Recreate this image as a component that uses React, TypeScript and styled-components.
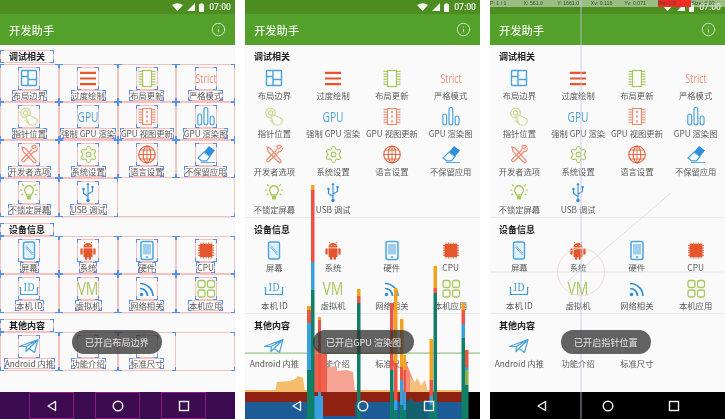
import React from 'react';
import styled, { createGlobalStyle, css } from 'styled-components';
import { Info, Settings } from 'lucide-react';

type Mode = 'bounds' | 'gpu' | 'pointer';

const BLUE = '#4ba3de';
const RED = '#e4572e';
const GREEN = '#a9c75c';
const SALMON = '#ee8c72';

const GlobalStyle = createGlobalStyle`
  html, body { margin: 0; padding: 0; background: #fff; }
  body { width: 725px; height: 419px; overflow: hidden; font-family: "Noto Sans CJK SC", "Noto Sans", sans-serif; }
`;

const corner = 'linear-gradient(#5b8fe8, #5b8fe8)';
const edge = 'linear-gradient(#f7c0c0, #f7c0c0)';

// the debug overlay: pink box with blue corner ticks
const marks = css`
  background-repeat: no-repeat;
  background-image:
    ${corner}, ${corner}, ${corner}, ${corner}, ${corner}, ${corner}, ${corner}, ${corner},
    ${edge}, ${edge}, ${edge}, ${edge};
  background-size:
    4px 1px, 1px 4px, 4px 1px, 1px 4px, 4px 1px, 1px 4px, 4px 1px, 1px 4px,
    100% 1px, 100% 1px, 1px 100%, 1px 100%;
  background-position:
    0 0, 0 0, 100% 0, 100% 0, 0 100%, 0 100%, 100% 100%, 100% 100%,
    0 0, 0 100%, 0 0, 100% 0;
`;

const Screens = styled.div`
  display: flex;
  gap: 10px;
  width: 725px;
  height: 419px;
`;

const Phone = styled.div`
  position: relative;
  width: 235px;
  height: 419px;
  flex: none;
  display: flex;
  flex-direction: column;
  overflow: hidden;
  background: #fafafa;
  filter: blur(0.35px);
`;

const StatusBar = styled.div`
  height: 14px;
  flex: none;
  display: flex;
  align-items: center;
  justify-content: flex-end;
  gap: 4px;
  padding-right: 4px;
  background: #4c8c20;
`;

const Clock = styled.span`
  font-family: Roboto, sans-serif;
  font-size: 8.6px;
  font-weight: 500;
  color: #f2f6ee;
  margin-left: 1px;
`;

const AppBar = styled.div`
  height: 31px;
  flex: none;
  display: flex;
  align-items: center;
  justify-content: space-between;
  padding: 0 9px;
  background: #53a02b;
  color: #eef6e8;
`;

const Title = styled.span`
  font-size: 11.3px;
  font-weight: 500;
  line-height: 16px;
`;

const Content = styled.div`
  flex: 1;
  min-height: 0;
`;

const Section = styled.section<{ $last?: boolean }>`
  border-bottom: ${(p) => (p.$last ? 'none' : '1px solid #e9e9e9')};
`;

const Heading = styled.div`
  height: 18.5px;
  padding-top: 5px;
  box-sizing: border-box;
  display: flex;
  align-items: flex-start;
`;

const HeadingText = styled.span<{ $bounds: boolean }>`
  padding: 0 9px;
  font-size: 9px;
  font-weight: 700;
  line-height: 13px;
  color: #222;
  ${(p) => p.$bounds && marks}
`;

const Grid = styled.div<{ $bounds: boolean }>`
  display: grid;
  grid-template-columns: repeat(4, 1fr);
  grid-auto-rows: 38.3px;
  ${(p) => p.$bounds && marks}
`;

const Cell = styled.div<{ $bounds: boolean }>`
  display: flex;
  flex-direction: column;
  align-items: center;
  padding-top: 3px;
  box-sizing: border-box;
  min-width: 0;
  ${(p) => p.$bounds && marks}
`;

const IconBox = styled.div<{ $bounds: boolean }>`
  width: 22px;
  height: 23px;
  flex: none;
  display: flex;
  align-items: center;
  justify-content: center;
  ${(p) => p.$bounds && marks}
`;

const Label = styled.span<{ $bounds: boolean }>`
  padding: 0 1px;
  font-size: 8.3px;
  line-height: 11px;
  color: #5a5a5a;
  white-space: nowrap;
  ${(p) => p.$bounds && marks}
`;

const NavBar = styled.div<{ $mode: Mode }>`
  height: 27px;
  flex: none;
  display: flex;
  align-items: center;
  justify-content: center;
  gap: 21px;
  background: ${(p) => (p.$mode === 'bounds' ? '#3b0a4f' : '#000')};
`;

const NavButton = styled.div<{ $bounds: boolean }>`
  position: relative;
  z-index: 2;
  width: 45px;
  height: 27px;
  display: flex;
  align-items: center;
  justify-content: center;
  ${(p) => p.$bounds && 'box-shadow: inset 0 0 0 1px #8c1a86;'}
`;

const Toast = styled.div<{ $left: number }>`
  position: absolute;
  z-index: 3;
  top: 330px;
  left: ${(p) => p.$left}px;
  height: 24px;
  padding: 0 13px;
  display: flex;
  align-items: center;
  border-radius: 12px;
  background: rgba(50, 50, 50, 0.76);
  color: #e4e4e4;
  font-size: 9.1px;
  white-space: nowrap;
`;

const Overlay = styled.svg`
  position: absolute;
  z-index: 1;
  left: 0;
  top: 0;
  pointer-events: none;
`;

const PointerInfo = styled.div`
  position: absolute;
  z-index: 4;
  left: 0;
  right: 0;
  top: 0;
  height: 7px;
  display: flex;
  background: rgba(200, 220, 190, 0.62);
`;

const PointerCell = styled.span<{ $alert?: boolean }>`
  flex: 1;
  font-family: "Liberation Sans", sans-serif;
  font-size: 5.2px;
  line-height: 7px;
  color: #3b4a33;
  white-space: nowrap;
  background: ${(p) => (p.$alert ? '#f02a24' : 'transparent')};
`;

const Ico = ({ children }: { children: React.ReactNode }) => (
  <svg width="22" height="23" viewBox="0 0 22 23" fill="none" strokeWidth="1.2" overflow="visible">
    {children}
  </svg>
);

const pins = (xs: number[], y0: number, count: number, len: number) =>
  xs
    .map((x) =>
      Array.from({ length: count }, (_, i) => `M${x} ${y0 + i * 2.6}h${len}`).join(''),
    )
    .join('');

const Chip = ({ color, dotted }: { color: string; dotted?: boolean }) => (
  <Ico>
    <rect x="6.5" y="3.5" width="9" height="16" stroke={color} />
    <path d={pins([3, 16], 4.5, 6, 3)} stroke={color} strokeWidth="1" />
    <path d="M3 3.5v16M19 3.5v16" stroke={color} strokeWidth="0.7" strokeDasharray="1.6 1" />
    {dotted && <path d="M11 6v12" stroke={color} strokeWidth="1.6" strokeDasharray="2 2.6" />}
  </Ico>
);

const Word = ({ text, color, size, w, y = 16 }: { text: string; color: string; size: number; w: number; y?: number }) => (
  <Ico>
    <text
      x={11 - w / 2}
      y={y}
      fontFamily="Open Sans, sans-serif"
      fontSize={size}
      fill={color}
      textLength={w}
      lengthAdjust="spacingAndGlyphs"
    >
      {text}
    </text>
  </Ico>
);

const icons: Record<string, React.ReactNode> = {
  layout: (
    <Ico>
      <rect x="3.5" y="3.5" width="15" height="15" rx="1" stroke={BLUE} strokeWidth="1.4" />
      <path d="M10 3.5v15M3.5 9.5H10M10 12.5h8.5" stroke={BLUE} strokeWidth="1.4" />
    </Ico>
  ),
  overdraw: (
    <Ico>
      <path d="M3 5.8h16M3 11.5h16M3 17.2h16" stroke={RED} strokeWidth="2.2" />
    </Ico>
  ),
  update: <Chip color={GREEN} />,
  strict: <Word text="Strict" color={SALMON} size={13} w={21} />,
  pointer: (
    <Ico>
      <circle cx="7.5" cy="8" r="4.8" stroke="#cfdc96" strokeWidth="1.3" />
      <circle cx="7.5" cy="8" r="2.2" stroke="#cfdc96" />
      <path d="M10 10l3 1 5 2.5c1.5 1 1.5 3 .5 4.5l-1.5 2h-5l-4-4 2 .5-2-4.5z" fill="#fafafa" stroke="#cfdc96" />
    </Ico>
  ),
  gpu: <Word text="GPU" color={BLUE} size={15} w={21} y={16.5} />,
  gpuView: <Chip color={SALMON} dotted />,
  chart: (
    <Ico>
      <rect x="2.8" y="9" width="3.8" height="11" rx="1.9" stroke={BLUE} />
      <rect x="9" y="2.5" width="3.8" height="17.5" rx="1.9" stroke={BLUE} />
      <rect x="15.2" y="11" width="3.8" height="9" rx="1.9" stroke={BLUE} />
    </Ico>
  ),
  tools: (
    <Ico>
      <path d="M4 4l3 1 11 12.5c.8 1.2-.8 2.8-2 2L5 8.5z" stroke={SALMON} />
      <path d="M18.5 3.5l-2.6 2.4-1.6-.8-.4-1.6C15.5 2 17.5 2 18.5 3.5zM14 6.5L4 16.5c-1 1.2 .6 3 2 2l10-10c1.8.4 3.6-1 3.4-3.6" stroke={SALMON} />
    </Ico>
  ),
  gear: <Settings size={19} strokeWidth={1.3} color={GREEN} />,
  globe: (
    <Ico>
      <circle cx="11" cy="11.5" r="8.3" stroke={RED} opacity="0.85" />
      <ellipse cx="11" cy="11.5" rx="3.8" ry="8.3" stroke={RED} opacity="0.85" />
      <path d="M11 3.2v16.6M2.7 11.5h16.6M4 7h14M4 16h14" stroke={RED} strokeWidth="1" opacity="0.85" />
    </Ico>
  ),
  eraser: (
    <Ico>
      <path d="M14 3l6 4.5-5 6-6-4.5z" fill="#2f8fdc" />
      <path d="M9 9l6 4.5-3.5 4.3H6.5L3 15z" stroke={BLUE} />
      <path d="M6 19.5h14" stroke={BLUE} strokeWidth="0.9" />
    </Ico>
  ),
  bulb: (
    <Ico>
      <path d="M7 11a4.4 4.4 0 1 1 8 0c-.6 1-1.2 1.6-1.4 3H8.4c-.2-1.4-.8-2-1.4-3z" stroke={GREEN} strokeWidth="1.3" />
      <path d="M8.6 15h4.8l-.6 3.5h-3.6z" fill={GREEN} />
      <path d="M2 9h2.4M17.6 9H20M4 3.5l1.8 1.6M18 3.5l-1.8 1.6M3.5 14l1.8-1.2M18.5 14l-1.8-1.2" stroke={GREEN} />
    </Ico>
  ),
  usb: (
    <Ico>
      <path d="M11 1.5l-1.6 2.6h3.2z" fill="#2f8fdc" />
      <path d="M11 4v15M11 15.5l-4.5-3V9M11 13l4.5-2.5V7" stroke="#2f8fdc" strokeWidth="1.1" />
      <circle cx="6.5" cy="8" r="1.3" fill="#2f8fdc" />
      <rect x="14.4" y="5" width="2.2" height="2.2" fill="#2f8fdc" />
      <circle cx="11" cy="19.5" r="1.8" fill="#2f8fdc" />
    </Ico>
  ),
  screen: (
    <Ico>
      <rect x="5.5" y="3" width="11" height="17" rx="2" stroke={BLUE} strokeWidth="1.4" fill="#e3f1fa" />
      <path d="M7.5 8l7 8M8 6.5l6.5 7.5" stroke={BLUE} strokeWidth="0.8" />
    </Ico>
  ),
  android: (
    <Ico>
      <path d="M6.5 8.5a4.5 4.5 0 0 1 9 0z" fill={RED} />
      <path d="M8 4.5L7 2.8M14 4.5l1-1.7" stroke={RED} strokeWidth="0.8" />
      <path d="M6.5 9.3h9v8a1 1 0 0 1-1 1h-7a1 1 0 0 1-1-1z" fill={RED} />
      <rect x="3.4" y="9.3" width="2.3" height="6.5" rx="1.15" fill={RED} />
      <rect x="16.3" y="9.3" width="2.3" height="6.5" rx="1.15" fill={RED} />
      <rect x="8" y="17" width="2.3" height="4" rx="1.15" fill={RED} />
      <rect x="11.7" y="17" width="2.3" height="4" rx="1.15" fill={RED} />
      <circle cx="9.2" cy="6.6" r="0.6" fill="#fafafa" />
      <circle cx="12.8" cy="6.6" r="0.6" fill="#fafafa" />
    </Ico>
  ),
  hardware: (
    <Ico>
      <rect x="5" y="2.5" width="12" height="18" rx="2" stroke={BLUE} strokeWidth="1.5" />
      <rect x="7" y="5" width="8" height="10.5" fill="#9ed0ee" />
      <circle cx="11" cy="18" r="1" fill={BLUE} />
    </Ico>
  ),
  cpu: (
    <Ico>
      <rect x="4.5" y="5" width="13" height="13" rx="1" fill={RED} />
      <path d="M3 6.5h16M3 9h16M3 11.5h16M3 14h16M3 16.5h16" stroke={RED} strokeWidth="0.9" />
      <path d="M6 3.5v16M8.5 3.5v16M11 3.5v16M13.5 3.5v16M16 3.5v16" stroke={RED} strokeWidth="0.9" />
    </Ico>
  ),
  id: (
    <Ico>
      <path d="M2.5 10v7.5h17V10M1.5 10.5h1M19.5 10.5h1" stroke="#3f9bd8" strokeWidth="1.2" />
      <text x="5.5" y="14" fontFamily="DejaVu Serif, serif" fontSize="11" fill="#3f9bd8" textLength="11" lengthAdjust="spacingAndGlyphs">
        ID
      </text>
    </Ico>
  ),
  vm: <Word text="VM" color={GREEN} size={19} w={21} y={18} />,
  wifi: (
    <Ico>
      <circle cx="5.5" cy="17.5" r="1.8" fill="#2f8fdc" />
      <path d="M4 11.5a7.5 7.5 0 0 1 7.5 7.5M4 6.5A13 13 0 0 1 17 19" stroke="#2f8fdc" strokeWidth="1.7" />
    </Ico>
  ),
  apps: (
    <Ico>
      <rect x="3" y="3.5" width="7" height="7" rx="1.8" stroke={GREEN} strokeWidth="1.3" />
      <rect x="12.5" y="3.5" width="7" height="7" rx="1.8" stroke={GREEN} strokeWidth="1.3" />
      <rect x="3" y="13" width="7" height="7" rx="1.8" stroke={GREEN} strokeWidth="1.3" />
      <rect x="12.5" y="13" width="7" height="7" rx="1.8" stroke={GREEN} strokeWidth="1.3" />
    </Ico>
  ),
  send: (
    <Ico>
      <path d="M1.5 11.5L20 4.5l-3.5 13-5.5-4-3 3 .3-5zM8.3 11.5L20 4.5 11 13.5" stroke={BLUE} strokeLinejoin="round" />
    </Ico>
  ),
  intro: <Ico>{null}</Ico>,
  size: <Ico>{null}</Ico>,
};

const sections = [
  {
    title: '调试相关',
    items: [
      ['布局边界', 'layout'],
      ['过度绘制', 'overdraw'],
      ['布局更新', 'update'],
      ['严格模式', 'strict'],
      ['指针位置', 'pointer'],
      ['强制 GPU 渲染', 'gpu'],
      ['GPU 视图更新', 'gpuView'],
      ['GPU 渲染图', 'chart'],
      ['开发者选项', 'tools'],
      ['系统设置', 'gear'],
      ['语言设置', 'globe'],
      ['不保留应用', 'eraser'],
      ['不锁定屏幕', 'bulb'],
      ['USB 调试', 'usb'],
    ],
  },
  {
    title: '设备信息',
    items: [
      ['屏幕', 'screen'],
      ['系统', 'android'],
      ['硬件', 'hardware'],
      ['CPU', 'cpu'],
      ['本机 ID', 'id'],
      ['虚拟机', 'vm'],
      ['网络相关', 'wifi'],
      ['本机应用', 'apps'],
    ],
  },
  {
    title: '其他内容',
    items: [
      ['Android 内推', 'send'],
      ['功能介绍', 'intro'],
      ['标准尺寸', 'size'],
    ],
  },
];

const ORANGE = '#f2a31e';
const BAR_RED = '#ec5442';
const BAR_BLUE = '#3a9fe0';
const TEAL = '#0f7f68';

// x, width, then [colour, bottom y] from the top of each bar downwards
const gpuBars: { x: number; w: number; top: number; parts: [string, number][] }[] = [
  { x: 62, w: 4, top: 306, parts: [[ORANGE, 310], [BAR_RED, 323], [BAR_BLUE, 370], [TEAL, 419]] },
  { x: 66, w: 3.5, top: 185, parts: [[ORANGE, 190], [BAR_RED, 262], [BAR_BLUE, 290], [TEAL, 419]] },
  { x: 73, w: 3, top: 317, parts: [[ORANGE, 320], [BAR_RED, 392], [BAR_BLUE, 419]] },
  { x: 112, w: 3.5, top: 289, parts: [[ORANGE, 296], [BAR_RED, 303], [TEAL, 419]] },
  { x: 145, w: 3.5, top: 303, parts: [[BAR_RED, 370], [TEAL, 419]] },
  { x: 149, w: 3.5, top: 288, parts: [[ORANGE, 363], [BAR_RED, 400], [BAR_BLUE, 410], [TEAL, 419]] },
  { x: 155, w: 3.5, top: 319, parts: [[ORANGE, 367], [BAR_RED, 380], [BAR_BLUE, 405], [TEAL, 419]] },
  { x: 158.5, w: 2.5, top: 355, parts: [[ORANGE, 370], [BAR_RED, 392], [BAR_BLUE, 410], [TEAL, 419]] },
  { x: 184.5, w: 3.5, top: 339, parts: [[ORANGE, 380], [BAR_RED, 396], [BAR_BLUE, 405], [TEAL, 419]] },
  { x: 188.5, w: 3.5, top: 266, parts: [[ORANGE, 288], [BAR_RED, 293], [TEAL, 419]] },
  { x: 216.5, w: 3.5, top: 303, parts: [[ORANGE, 310], [BAR_RED, 324], [BAR_BLUE, 338], [TEAL, 419]] },
  { x: 220, w: 3.5, top: 350, parts: [[BAR_RED, 367], [BAR_BLUE, 370], ['#8fb04a', 385], [TEAL, 419]] },
];

const GpuChart = () => (
  <Overlay width="235" height="419" viewBox="0 0 235 419">
    <rect x="0" y="390" width="223" height="2" fill="#f6bd6a" />
    <polygon points="30,392 32,382 45,381 50,379 53,376 58,378 60,392" fill="#f6bd6a" />
    <polygon points="80,392 80,368 92,366 92,371 102,370 108,372 110,392" fill="#f6a394" />
    <polygon points="68,392 68,345 74,350 76,353 82,354 82,392" fill="#f1604c" />
    <polygon points="161,392 161,362 165,372 170,385 172,392" fill="#f28a74" />
    <polygon points="165,392 165,377 170,382 172,378 176,385 180,380 183,392" fill="#f6c07a" />
    <rect x="0" y="392" width="223" height="10" fill="#8f2212" />
    <rect x="0" y="402" width="223" height="17" fill="#1d5c96" />
    <rect x="78" y="392" width="32" height="24" fill="#8f2212" />
    <rect x="69" y="396" width="9" height="23" fill={BAR_BLUE} />
    <polygon points="160,402 166,398 172,404 180,400 182,419 160,419" fill="#14606f" />
    <rect x="0" y="352.6" width="235" height="1" fill="#7cb868" />
    {gpuBars.map((bar) => {
      let y = bar.top;
      return bar.parts.map(([color, end]) => {
        const rect = <rect key={`${bar.x}-${end}`} x={bar.x} y={y} width={bar.w} height={end - y} fill={color} />;
        y = end;
        return rect;
      });
    })}
  </Overlay>
);

const PointerTrace = () => (
  <Overlay width="235" height="419" viewBox="0 0 235 419">
    <path d="M0 272H235" stroke="#e3e3e8" strokeWidth="1" />
    <path d="M91 0V419" stroke="#c4c4ec" strokeWidth="1" opacity="0.8" />
    <circle cx="91" cy="272" r="23.5" stroke="#f4cfc9" strokeWidth="0.8" fill="none" />
    <path d="M78 281L94 267L181 193" stroke="#d7d7ec" strokeWidth="0.8" fill="none" />
  </Overlay>
);

const pointerFields = ['P: 1 / 1', 'X: 561.0', 'Y: 1661.0', 'Xv: 0.116', 'Yv: 0.071', 'Prs: 1.0', 'Size: 0.03'];

const StatusIcons = () => (
  <>
    <svg width="11" height="8" viewBox="0 0 11 8">
      <path d="M0 2Q5.5-1.5 11 2L5.5 8z" fill="#f4f7f1" />
    </svg>
    <svg width="8" height="8" viewBox="0 0 8 8">
      <path d="M8 0V8H0z" fill="#f4f7f1" />
    </svg>
    <svg width="5" height="9" viewBox="0 0 5 9">
      <path d="M1.6 0h1.8v1H5v8H0V1h1.6z" fill="#f4f7f1" />
    </svg>
  </>
);

function Screen({ mode, toast, toastLeft }: { mode: Mode; toast: string; toastLeft: number }) {
  const bounds = mode === 'bounds';
  return (
    <Phone>
      <StatusBar>
        <StatusIcons />
        <Clock>07:00</Clock>
      </StatusBar>
      <AppBar>
        <Title>开发助手</Title>
        <Info size={15} strokeWidth={1.4} color="#dcebd2" />
      </AppBar>
      <Content>
        {sections.map((section, index) => (
          <Section key={section.title} $last={index === sections.length - 1}>
            <Heading>
              <HeadingText $bounds={bounds}>{section.title}</HeadingText>
            </Heading>
            <Grid $bounds={bounds}>
              {section.items.map(([label, icon]) => (
                <Cell key={label} $bounds={bounds}>
                  <IconBox $bounds={bounds}>{icons[icon]}</IconBox>
                  <Label $bounds={bounds}>{label}</Label>
                </Cell>
              ))}
            </Grid>
          </Section>
        ))}
      </Content>
      <NavBar $mode={mode}>
        <NavButton $bounds={bounds}>
          <svg width="12" height="12" viewBox="0 0 12 12" fill="none">
            <path d="M9.5 1.5V10.5L2 6z" stroke="#f2f2f2" strokeWidth="1.4" strokeLinejoin="round" />
          </svg>
        </NavButton>
        <NavButton $bounds={bounds}>
          <svg width="12" height="12" viewBox="0 0 12 12" fill="none">
            <circle cx="6" cy="6" r="4.8" stroke="#f2f2f2" strokeWidth="1.4" />
          </svg>
        </NavButton>
        <NavButton $bounds={bounds}>
          <svg width="12" height="12" viewBox="0 0 12 12" fill="none">
            <rect x="1.5" y="1.5" width="9" height="9" stroke="#f2f2f2" strokeWidth="1.4" />
          </svg>
        </NavButton>
      </NavBar>
      {mode === 'gpu' && <GpuChart />}
      {mode === 'pointer' && <PointerTrace />}
      {mode === 'pointer' && (
        <PointerInfo>
          {pointerFields.map((field) => (
            <PointerCell key={field} $alert={field.startsWith('Prs')}>
              {field}
            </PointerCell>
          ))}
        </PointerInfo>
      )}
      <Toast $left={toastLeft}>{toast}</Toast>
    </Phone>
  );
}

export default function App() {
  return (
    <>
      <GlobalStyle />
      <Screens>
        <Screen mode="bounds" toast="已开启布局边界" toastLeft={72} />
        <Screen mode="gpu" toast="已开启GPU 渲染图" toastLeft={68} />
        <Screen mode="pointer" toast="已开启指针位置" toastLeft={71} />
      </Screens>
    </>
  );
}
